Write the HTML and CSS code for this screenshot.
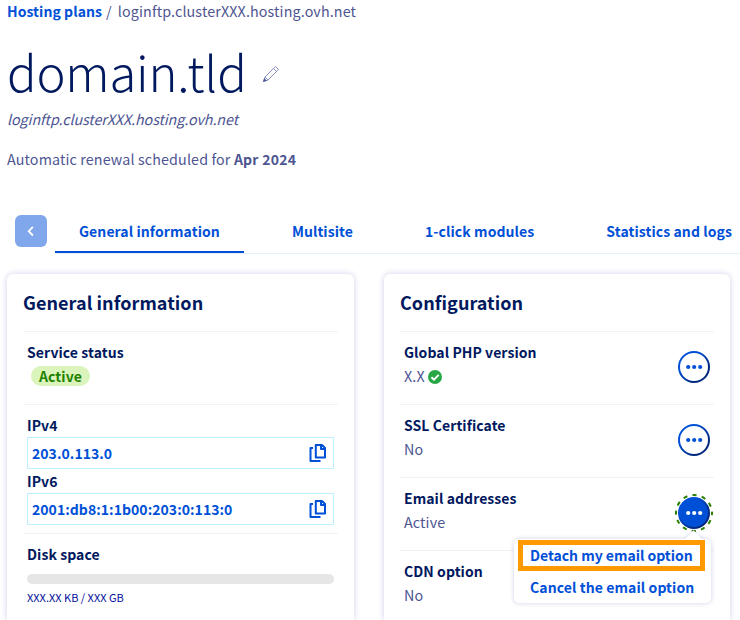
FILE: index.html
```html
<!DOCTYPE html>
<html lang="en">
<head>
<meta charset="utf-8">
<title>Hosting</title>
<link rel="stylesheet" href="styles.css">
</head>
<body>
<header class="page-head">
  <nav class="breadcrumb"><a class="crumb-link">Hosting plans</a><span class="crumb-sep">/</span><span class="crumb-current">loginftp.clusterXXX.hosting.ovh.net</span></nav>
  <div class="title-row">
    <h1 class="title">domain.tld</h1>
    <svg class="pencil" viewBox="0 0 18 18"><path d="M1.5 16.5L3 12L13.5 1.5L16.5 4.5L6 15ZM3 12L6 15M11.5 3.5L14.5 6.5" fill="none" stroke="#7d88bd" stroke-width=".9"/><path d="M1 17L2.2 13L5 15.8Z" fill="#4d5592"/></svg>
  </div>
  <p class="subtitle">loginftp.clusterXXX.hosting.ovh.net</p>
  <p class="renewal">Automatic renewal scheduled for <b>Apr 2024</b></p>
</header>

<div class="tab-bar">
  <button class="scroll-btn"><svg viewBox="0 0 32 32"><path d="M17.9 11.9L13.7 16.2L17.9 20.5" fill="none" stroke="#fff" stroke-width="1.8"/></svg></button>
  <nav class="tabs">
    <a class="tab tab-active">General information</a>
    <a class="tab">Multisite</a>
    <a class="tab">1-click modules</a>
    <a class="tab">Statistics and logs</a>
  </nav>
</div>

<main class="cards">
  <section class="card card-general">
    <h2 class="card-title">General information</h2>
    <div class="row">
      <div class="label">Service status</div>
      <div class="value"><span class="badge">Active</span></div>
    </div>
    <div class="row row-ip">
      <div class="label">IPv4</div>
      <div class="copy-field"><span>203.0.113.0</span><svg class="copy" viewBox="0 0 18 20"><path d="M6.8 2H13L16 5V14.5H6.8Z M12 2V6H16" fill="none" stroke="#0050d7" stroke-width="2" stroke-linejoin="round"/><path d="M4 5H1.5V18H11.5" fill="none" stroke="#0050d7" stroke-width="2" stroke-linejoin="round"/></svg></div>
      <div class="label">IPv6</div>
      <div class="copy-field"><span>2001:db8:1:1b00:203:0:113:0</span><svg class="copy" viewBox="0 0 18 20"><path d="M6.8 2H13L16 5V14.5H6.8Z M12 2V6H16" fill="none" stroke="#0050d7" stroke-width="2" stroke-linejoin="round"/><path d="M4 5H1.5V18H11.5" fill="none" stroke="#0050d7" stroke-width="2" stroke-linejoin="round"/></svg></div>
    </div>
    <div class="row">
      <div class="label">Disk space</div>
      <div class="meter"></div>
      <div class="usage">XXX.XX KB / XXX GB</div>
    </div>
  </section>

  <section class="card card-config">
    <h2 class="card-title">Configuration</h2>
    <div class="row row-action">
      <div><div class="label">Global PHP version</div><div class="value">X.X <svg class="check" viewBox="0 0 14 14"><circle cx="7" cy="7" r="7" fill="#28a745"/><path d="M3.4 7.2L6 9.7L10.7 4.9" fill="none" stroke="#fff" stroke-width="2"/></svg></div></div>
      <svg class="more" viewBox="0 0 32 32"><defs><linearGradient id="ring" x1="0" y1="0" x2="1" y2="1"><stop offset=".3" stop-color="#0050d7"/><stop offset=".75" stop-color="#00287d"/></linearGradient></defs><circle cx="16" cy="16" r="15" fill="#fff" stroke="url(#ring)" stroke-width="2"/><g fill="#0050d7"><circle cx="10.2" cy="16" r="2.1"/><circle cx="16.2" cy="16" r="2.1"/><circle cx="22.2" cy="16" r="2.1"/></g></svg>
    </div>
    <div class="row row-action">
      <div><div class="label">SSL Certificate</div><div class="value">No</div></div>
      <svg class="more" viewBox="0 0 32 32"><circle cx="16" cy="16" r="15" fill="#fff" stroke="url(#ring)" stroke-width="2"/><g fill="#0050d7"><circle cx="10.2" cy="16" r="2.1"/><circle cx="16.2" cy="16" r="2.1"/><circle cx="22.2" cy="16" r="2.1"/></g></svg>
    </div>
    <div class="row row-action">
      <div><div class="label">Email addresses</div><div class="value">Active</div></div>
      <div class="more-wrap">
        <svg class="more" viewBox="0 0 32 32"><circle cx="16" cy="16" r="18" fill="none" stroke="#2b8000" stroke-width="2" stroke-dasharray="4.2 5.225" stroke-dashoffset="2.1"/><circle cx="16" cy="16" r="15" fill="#0050d7" stroke="url(#ring)" stroke-width="2"/><g fill="#fff"><circle cx="10.2" cy="16" r="2.1"/><circle cx="16.2" cy="16" r="2.1"/><circle cx="22.2" cy="16" r="2.1"/></g></svg>
        <div class="menu">
          <div class="menu-arrow"></div>
          <div class="menu-item menu-marked">Detach my email option</div>
          <div class="menu-item">Cancel the email option</div>
        </div>
      </div>
    </div>
    <div class="row row-action row-last">
      <div><div class="label">CDN option</div><div class="value">No</div></div>
    </div>
  </section>
</main>
</body>
</html>
```
FILE: styles.css
```css
* { box-sizing: border-box; }
body {
  margin: 0;
  height: 620px;
  overflow: hidden;
  background: #fff;
  color: #4d5592;
  font: 14.3px/24px "Noto Sans CJK SC", "Noto Sans", sans-serif;
  letter-spacing: .13px;
}
h1, h2, p { margin: 0; }
.page-head { padding-left: 7px; height: 216px; margin-top: -1px; }
.breadcrumb { height: 24px; white-space: nowrap; }
.crumb-link { color: #0050d7; font-size: 14px; font-weight: 700; letter-spacing: .07px; }
.crumb-sep { margin: 0 6px 0 4px; }
.title-row { display: flex; height: 84px; padding-top: 17px; }
.title { color: #00185e; font-size: 49px; font-weight: 300; line-height: 62px; letter-spacing: -.2px; }
.pencil { width: 18px; height: 18px; margin: 25px 0 0 15px; }
.subtitle { font-style: italic; letter-spacing: -.08px; }
.renewal { margin-top: 16px; }
.renewal b { font-size: 14px; font-weight: 700; letter-spacing: .25px; }

.tab-bar { display: flex; padding-left: 15px; height: 39px; }
.scroll-btn { flex: none; width: 32px; height: 32px; padding: 0; border: 0; border-radius: 6px; background: #80a7eb; margin-right: 8px; }
.scroll-btn svg { display: block; width: 32px; height: 32px; }
.tabs { flex: 1; min-width: 0; display: flex; gap: 24px; border-bottom: 1px solid #e5f0fb; white-space: nowrap; }
.tab { flex: none; height: 38px; padding: 4px 24px 0; color: #0050d7; font-size: 14px; font-weight: 700; letter-spacing: .08px; }
.tab-active { border-bottom: 2px solid #0050d7; }

.cards { display: flex; gap: 30px; padding: 20px 0 0 7px; }
.card { width: 347px; height: 346px; padding: 0 16px; border-radius: 6px 6px 0 0; box-shadow: 0 0 6px rgba(0, 14, 156, .2); }
.card-config { width: 346px; }
.card-title { height: 57px; padding-top: 16px; color: #00185e; font-size: 18px; line-height: 24px; font-weight: 700; letter-spacing: .06px; }
.row { height: 73px; padding: 8px 4px 0; border-top: 1px solid #f2f2f2; }
.row-ip { height: 129px; }
.row-last { height: 70px; }
.label { color: #00185e; font-size: 14px; font-weight: 700; letter-spacing: .07px; }
.badge { display: block; width: 59px; height: 20px; margin: 2px 0 0 4px; border-radius: 10px; background: #daf4bb; color: #1f8100; font-size: 14px; font-weight: 700; line-height: 20px; text-align: center; }
.copy-field { display: flex; align-items: center; justify-content: space-between; height: 32px; padding: 0 6px 0 4px; border: 1px solid #bef1ff; color: #0050d7; font-size: 14px; font-weight: 700; letter-spacing: .04px; }
.copy { width: 18px; height: 20px; }
.meter { height: 10px; margin-top: 8px; border-radius: 5px; background: #e6e6e6; }
.usage { color: #000e9c; font-size: 11px; line-height: 18px; margin-top: 4px; letter-spacing: 0; }
.row-action { display: flex; justify-content: space-between; }
.check { width: 14px; height: 14px; vertical-align: -2px; margin-left: -.5px; }
.more { display: block; flex: none; width: 32px; height: 32px; margin-top: 11px; overflow: visible; }
.more-wrap { position: relative; }
.menu { position: absolute; right: -1px; top: 53px; width: 197px; height: 64px; border-radius: 5px; background: #fff; box-shadow: 0 0 5px rgba(0, 14, 156, .2); }
.menu-arrow { position: absolute; right: 11px; top: -6px; width: 13px; height: 13px; background: #fff; transform: rotate(45deg); box-shadow: -1px -1px 2px rgba(0, 14, 156, .1); }
.menu-item { position: relative; height: 32px; padding: 4px 16px 0; color: #0050d7; font-size: 14px; font-weight: 700; letter-spacing: .09px; white-space: nowrap; }
.menu-marked { width: 187px; height: 31px; margin: 1px 0 0 4px; padding: 0 7px; border: 5px solid #ff9900; line-height: 21px; letter-spacing: -.02px; }
```
